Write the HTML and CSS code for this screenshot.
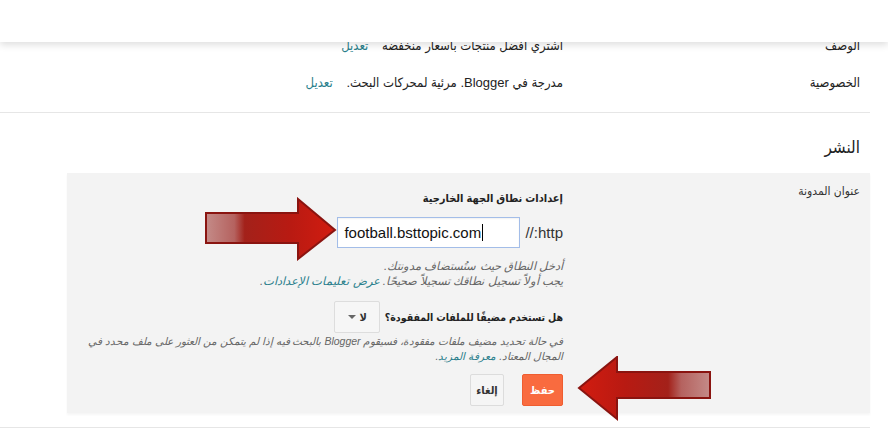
FILE: index.html
```html
<!DOCTYPE html>
<html lang="ar" dir="rtl">
<head>
<meta charset="utf-8">
<link rel="stylesheet" href="styles.css">
</head>
<body>
<div class="topbar"></div>
<main class="page">
  <div class="row basic">
    <div class="label">الوصف</div>
    <div class="value">اشتري افضل منتجات باسعار منخفضه <a class="edit" href="#">تعديل</a></div>
  </div>
  <div class="row basic">
    <div class="label">الخصوصية</div>
    <div class="value">مدرجة في Blogger. مرئية لمحركات البحث. <a class="edit" href="#">تعديل</a></div>
  </div>
  <hr class="sep">
  <h2 class="section">النشر</h2>
  <div class="panel row">
    <div class="label">عنوان المدونة</div>
    <div class="value editor">
      <div class="title">إعدادات نطاق الجهة الخارجية</div>
      <div class="domain">
        <span class="proto">http://</span>
        <div class="input"><span>football.bsttopic.com</span><i class="caret"></i></div>
      </div>
      <p class="help">أدخل النطاق حيث ستُستضاف مدونتك.<br>يجب أولاً تسجيل نطاقك تسجيلاً صحيحًا. <a href="#">عرض تعليمات الإعدادات</a>.</p>
      <div class="question">
        <span class="qtext">هل تستخدم مضيفًا للملفات المفقودة؟</span>
        <div class="select"><span>لا</span><i class="tri"></i></div>
      </div>
      <p class="help wide">في حالة تحديد مضيف ملفات مفقودة، فسيقوم Blogger بالبحث فيه إذا لم يتمكن من العثور على ملف محدد في المجال المعتاد. <a href="#">معرفة المزيد</a>.</p>
      <div class="buttons">
        <button class="btn save">حفظ</button>
        <button class="btn cancel">إلغاء</button>
      </div>
    </div>
  </div>
  <hr class="sep bottom">
</main>

<svg class="arrow arrow-right" width="134" height="64" viewBox="0 0 134 64">
  <defs>
    <linearGradient id="g1" x1="0" x2="1" y1="0" y2="0">
      <stop offset="0" stop-color="#c48b88"/>
      <stop offset="0.22" stop-color="#b5625f"/>
      <stop offset="0.3" stop-color="#a3211a"/>
      <stop offset="0.65" stop-color="#b81a12"/>
      <stop offset="1" stop-color="#d21c10"/>
    </linearGradient>
  </defs>
  <path d="M2 16 H94 V2 L131 33 L94 62 V46 H2 Z" fill="url(#g1)" stroke="#8a1410" stroke-width="2" stroke-linejoin="miter"/>
</svg>

<svg class="arrow arrow-left" width="136" height="66" viewBox="0 0 136 66">
  <defs>
    <linearGradient id="g2" x1="1" x2="0" y1="0" y2="0">
      <stop offset="0" stop-color="#c48b88"/>
      <stop offset="0.22" stop-color="#b5625f"/>
      <stop offset="0.32" stop-color="#a3211a"/>
      <stop offset="0.65" stop-color="#b81a12"/>
      <stop offset="1" stop-color="#d21c10"/>
    </linearGradient>
  </defs>
  <path d="M133 16 H40 V1 L2 32 L40 63 V42 H133 Z" fill="url(#g2)" stroke="#8a1410" stroke-width="2" stroke-linejoin="miter"/>
</svg>
</body>
</html>
```

FILE: styles.css
```css
* { box-sizing: border-box; }

html, body {
  margin: 0;
  background: #fff;
}

body {
  font-family: "Liberation Sans", "DejaVu Sans Condensed", "DejaVu Sans", sans-serif;
  font-size: 13px;
  color: #222;
  width: 888px;
  height: 448px;
  overflow: hidden;
  position: relative;
}

a { color: #2a7f8c; text-decoration: none; }

.topbar {
  position: absolute;
  top: 0;
  left: 0;
  right: 0;
  height: 42px;
  background: #fff;
  box-shadow: 0 3px 7px rgba(0, 0, 0, 0.13);
  z-index: 5;
}

.page {
  width: 870px;
  margin: 0 18px 0 0;
  padding-top: 27px;
}

.row {
  display: grid;
  grid-template-columns: 307px 1fr;
}

.basic {
  height: 37px;
  align-items: center;
}

.label {
  padding-right: 10px;
  color: #222;
}

.value { color: #222; }

.edit { margin-right: 10px; }

.sep {
  border: 0;
  border-top: 1px solid #e6e6e6;
  margin: 11px 0 0 0;
}

.section {
  margin: 0;
  padding: 24px 10px 0 0;
  height: 60px;
  font-size: 17px;
  font-weight: normal;
  color: #222;
}

.panel {
  background: #f3f3f3;
  margin-left: 67px;
  padding: 11px 0 7px;
  box-shadow: 0 2px 2px rgba(0, 0, 0, 0.04);
}

.panel .label {
  font-size: 12px;
  color: #333;
}

.editor {
  padding-top: 8px;
}

.title {
  font-weight: bold;
  font-size: 11px;
  color: #222;
  margin-bottom: 12px;
}

.domain {
  display: flex;
  align-items: center;
  gap: 5px;
}

.proto {
  font-size: 15px;
  color: #333;
}

.input {
  width: 183px;
  height: 31px;
  background: #fff;
  border: 1px solid #a3bde8;
  box-shadow: inset 0 1px 2px rgba(0, 0, 0, 0.06);
  direction: ltr;
  display: flex;
  align-items: center;
  padding-left: 6px;
  font-size: 15px;
  color: #111;
}

.caret {
  display: inline-block;
  width: 1px;
  height: 17px;
  background: #000;
  margin-left: 1px;
}

.help {
  margin: 11px 0 0;
  font-size: 11.5px;
  font-style: italic;
  color: #666;
  line-height: 15px;
}

.question {
  display: flex;
  align-items: center;
  gap: 5px;
  margin-top: 12px;
}

.qtext {
  font-weight: bold;
  font-size: 10.5px;
  color: #222;
}

.select {
  width: 46px;
  height: 32px;
  border: 1px solid #ddd;
  background: #f6f6f6;
  border-radius: 2px;
  display: flex;
  align-items: center;
  justify-content: space-between;
  padding: 0 12px 0 13px;
  font-size: 11px;
  font-weight: bold;
  color: #333;
}

.tri {
  width: 0;
  height: 0;
  border-left: 4px solid transparent;
  border-right: 4px solid transparent;
  border-top: 4px solid #666;
}

.help.wide {
  margin-top: 1px;
  font-size: 10.5px;
}

.buttons {
  display: flex;
  gap: 18px;
  margin-top: 10px;
}

.btn {
  height: 32px;
  font-family: inherit;
  font-size: 11px;
  font-weight: bold;
  border-radius: 2px;
  padding: 0;
}

.save {
  width: 41px;
  background: #f96b3f;
  border: 1px solid #ef5d30;
  color: #fff;
}

.cancel {
  width: 34px;
  background: #f5f5f5;
  border: 1px solid #dcdcdc;
  color: #333;
}

.sep.bottom {
  margin-top: 14px;
}

.arrow {
  position: absolute;
  z-index: 6;
}

.arrow-right {
  left: 204px;
  top: 197px;
}

.arrow-left {
  left: 577px;
  top: 356px;
}
```
